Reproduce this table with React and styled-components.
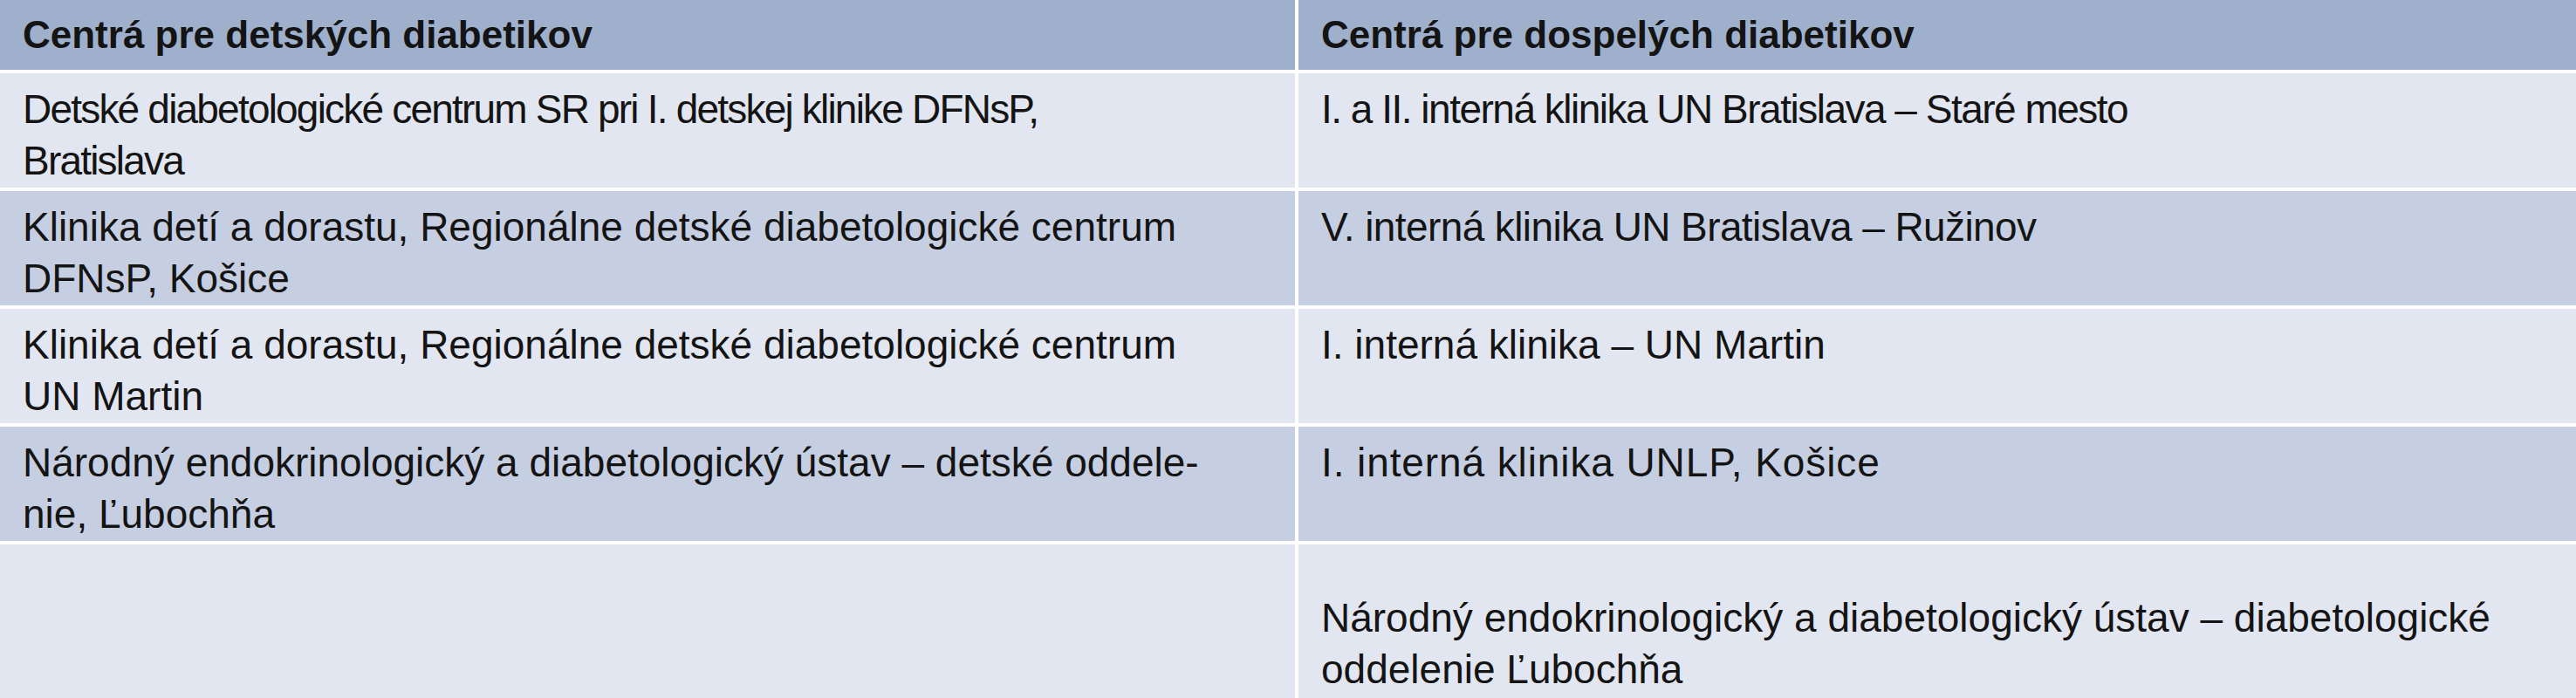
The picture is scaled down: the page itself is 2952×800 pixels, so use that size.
import React from "react";
import styled, { createGlobalStyle } from "styled-components";

const GlobalStyle = createGlobalStyle`
  html, body {
    margin: 0;
    padding: 0;
    background: #ffffff;
  }
`;

const Table = styled.div`
  width: 2952px;
  height: 800px;
  overflow: hidden;
  display: grid;
  grid-template-columns: 1484px 1464px;
  grid-template-rows: 80px repeat(4, 131px) 200px;
  gap: 4px;
  background-color: #ffffff;
  font-family: "Liberation Sans", Arial, sans-serif;
  color: #141414;
`;

const HeadCell = styled.div`
  background-color: #9fb0cd;
  font-weight: 700;
  font-size: 44px;
  line-height: 59px;
  padding: 10px 26px 0;
  white-space: nowrap;
`;

const Cell = styled.div`
  background-color: ${(p) => (p.$shade ? "#c6cee1" : "#e2e6f0")};
  font-size: 46px;
  line-height: 59px;
  letter-spacing: ${(p) => p.$tracking || 0}px;
  padding: ${(p) => (p.$last ? "55px" : "12px")} 26px 0;
  white-space: nowrap;
`;

const rows = [
  {
    left: ["Detské diabetologické centrum SR pri I. detskej klinike DFNsP,", "Bratislava"],
    right: ["I. a II. interná klinika UN Bratislava – Staré mesto"],
    tracking: [-1.8, -1.5],
  },
  {
    left: ["Klinika detí a dorastu, Regionálne detské diabetologické centrum", "DFNsP, Košice"],
    right: ["V. interná klinika UN Bratislava – Ružinov"],
    tracking: [0, -0.6],
  },
  {
    left: ["Klinika detí a dorastu, Regionálne detské diabetologické centrum", "UN Martin"],
    right: ["I. interná klinika – UN Martin"],
    tracking: [0, 0],
  },
  {
    left: ["Národný endokrinologický a diabetologický ústav – detské oddele-", "nie, Ľubochňa"],
    right: ["I. interná klinika UNLP, Košice"],
    tracking: [0, 0.9],
  },
  {
    left: [],
    right: ["Národný endokrinologický a diabetologický ústav – diabetologické", "oddelenie Ľubochňa"],
    tracking: [0, 0],
  },
];

const Lines = ({ lines }) =>
  lines.map((line, i) => (
    <React.Fragment key={i}>
      {i > 0 && <br />}
      {line}
    </React.Fragment>
  ));

const App = () => {
  return (
    <>
      <GlobalStyle />
      <Table>
        <HeadCell>Centrá pre detských diabetikov</HeadCell>
        <HeadCell>Centrá pre dospelých diabetikov</HeadCell>
        {rows.map((row, i) => {
          const last = i === rows.length - 1;
          return (
            <React.Fragment key={i}>
              <Cell $shade={i % 2 === 1} $last={last} $tracking={row.tracking[0]}>
                <Lines lines={row.left} />
              </Cell>
              <Cell $shade={i % 2 === 1} $last={last} $tracking={row.tracking[1]}>
                <Lines lines={row.right} />
              </Cell>
            </React.Fragment>
          );
        })}
      </Table>
    </>
  );
};

export default App;
